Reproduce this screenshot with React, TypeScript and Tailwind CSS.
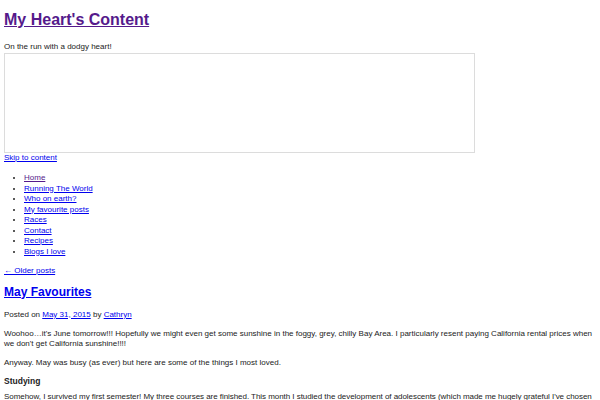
const navItems = [
  { label: "Home", visited: true },
  { label: "Running The World", visited: false },
  { label: "Who on earth?", visited: false },
  { label: "My favourite posts", visited: false },
  { label: "Races", visited: false },
  { label: "Contact", visited: false },
  { label: "Recipes", visited: false },
  { label: "Blogs I love", visited: false },
];

const link = "text-[#0000ee] underline";

export default function App() {
  return (
    <div className="min-h-[400px] bg-white pl-[4px] font-['Liberation_Sans',Arial,sans-serif] text-[8px] leading-[10.5px] text-[#222]">
      {/* Site header */}
      <h1 className="pt-[10px] text-[16px] font-bold leading-[20px]">
        <a href="#" className="text-[#551a8b] underline">My Heart&apos;s Content</a>
      </h1>
      <p className="mt-[12px]">On the run with a dodgy heart!</p>
      <div className="h-[100px] w-[471px] border border-[#dcdcdc]"></div>
      <a href="#" className={link}>Skip to content</a>

      {/* Menu */}
      <ul className="mt-[10px] list-disc pl-[20px]">
        {navItems.map((item) => (
          <li key={item.label}>
            <a href="#" className={item.visited ? "text-[#551a8b] underline" : link}>
              {item.label}
            </a>
          </li>
        ))}
      </ul>

      <div className="mt-[9px]">
        <a href="#" className={link}>← Older posts</a>
      </div>

      {/* Post */}
      <h2 className="mt-[7px] text-[12px] font-bold leading-[17px]">
        <a href="#" className={link}>May Favourites</a>
      </h2>
      <p className="mt-[9px]">
        Posted on <a href="#" className={link}>May 31, 2015</a> by <a href="#" className={link}>Cathryn</a>
      </p>
      <p className="mt-[8.5px] pr-[4px]">
        Woohoo…it&apos;s June tomorrow!!! Hopefully we might even get some sunshine in the foggy, grey, chilly Bay Area. I particularly resent paying California rental prices when we don&apos;t get California sunshine!!!!
      </p>
      <p className="mt-[8px]">Anyway. May was busy (as ever) but here are some of the things I most loved.</p>
      <p className="mt-[7.5px] text-[8.5px] font-bold">Studying</p>
      <p className="mt-[6px] tracking-[-0.05px]">
        Somehow, I survived my first semester! My three courses are finished. This month I studied the development of adolescents (which made me hugely grateful I&apos;ve chosen not to have any) and lots more besides.
      </p>
    </div>
  );
}
